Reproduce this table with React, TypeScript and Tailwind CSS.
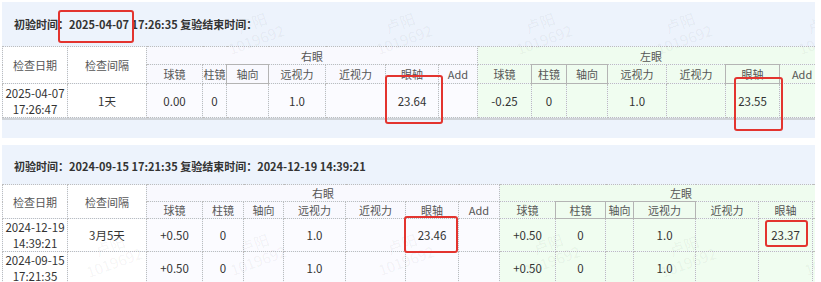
import React from "react";

const subHeads = ["球镜", "柱镜", "轴向", "远视力", "近视力", "眼轴", "Add"];

function Watermark({ cls }: { cls: string }) {
  return (
    <div
      className={
        "pointer-events-none absolute -rotate-[20deg] whitespace-nowrap text-[15px] leading-[17px] text-black/[0.055] font-['Noto_Sans_CJK_SC',sans-serif] " +
        cls
      }
    >
      <div className="pl-[16px]">卢阳</div>
      <div>1019692</div>
    </div>
  );
}

function DataTable({
  widths,
  heights,
  rows,
  solidRight,
  solidLeft,
  tableW,
}: {
  widths: string[];
  heights: string[];
  rows: string[][];
  solidRight: number[];
  solidLeft: number[];
  tableW: string;
}) {
  const base =
    "border border-dotted border-[#bdbdbd] p-0 text-center align-middle font-normal whitespace-nowrap overflow-hidden";
  return (
    <table className={"table-fixed border-collapse " + tableW}>
      <colgroup>
        {widths.map((w, i) => (
          <col key={i} className={w} />
        ))}
      </colgroup>
      <thead>
        <tr className={heights[0]}>
          <th rowSpan={2} className={base + " bg-white text-[11px] leading-[14px] text-[#555]"}>
            检查日期
          </th>
          <th rowSpan={2} className={base + " bg-white text-[11px] leading-[14px] text-[#555]"}>
            检查间隔
          </th>
          <th colSpan={7} className={base + " bg-[#f9f9fe] text-[11px] leading-[14px] text-[#555]"}>
            右眼
          </th>
          <th colSpan={7} className={base + " bg-[#effcef] text-[11px] leading-[14px] text-[#555]"}>
            左眼
          </th>
        </tr>
        <tr className={heights[1]}>
          {subHeads.map((h, i) => (
            <th
              key={"r" + i}
              className={
                base +
                " bg-[#f9f9fe] text-[11px] leading-[14px] text-[#555] " +
                (solidRight.includes(i) ? "!border-solid !border-[#b4b4b4]" : "")
              }
            >
              {h}
            </th>
          ))}
          {subHeads.map((h, i) => (
            <th
              key={"l" + i}
              className={
                base +
                " bg-[#effcef] text-[11px] leading-[14px] text-[#555] " +
                (solidLeft.includes(i) ? "!border-solid !border-[#b4b4b4]" : "")
              }
            >
              {h}
            </th>
          ))}
        </tr>
      </thead>
      <tbody>
        {rows.map((r, ri) => (
          <tr key={ri} className={heights[2 + ri]}>
            {r.map((v, ci) => (
              <td
                key={ci}
                className={
                  base +
                  " text-[11.5px] leading-[16px] text-[#333] " +
                  (ci < 2 ? "bg-white" : ci < 9 ? "bg-[#fbfbff]" : "bg-[#f0fdf0]")
                }
              >
                {v.includes("|") ? (
                  <>
                    <div>{v.split("|")[0]}</div>
                    <div>{v.split("|")[1]}</div>
                  </>
                ) : (
                  v
                )}
              </td>
            ))}
          </tr>
        ))}
      </tbody>
    </table>
  );
}

function RedBox({ cls }: { cls: string }) {
  return (
    <div
      className={
        "pointer-events-none absolute rounded-[3px] border-2 border-[#e3342f] " + cls
      }
    />
  );
}

export default function App() {
  return (
    <div className="relative h-[282px] w-[821px] overflow-hidden bg-white font-['Noto_Sans_CJK_SC',sans-serif]">
      <div className="flex flex-col gap-[7px] pl-[2px] pt-[2px]">
        {/* Section 1 */}
        <div className="relative flex h-[136px] w-[813px] shrink-0 flex-col overflow-hidden bg-[#edf3fc]">
          <div className="flex h-[44px] shrink-0 items-center pl-[12px] text-[11px] font-bold text-[#333]">
            初验时间：2025-04-07 17:26:35 复验结束时间：
          </div>
          <div className="shrink-0 border-b-2 border-[#cfd3d8]">
            <DataTable
              tableW="w-[822px]"
              widths={[
                "w-[65px]", "w-[79px]", "w-[56px]", "w-[24px]", "w-[42px]", "w-[57px]", "w-[60px]", "w-[53px]", "w-[39px]",
                "w-[54px]", "w-[35px]", "w-[41px]", "w-[59px]", "w-[59px]", "w-[54px]", "w-[45px]",
              ]}
              heights={["h-[18px]", "h-[19px]", "h-[34px]"]}
              rows={[
                ["2025-04-07|17:26:47", "1天", "0.00", "0", "", "1.0", "", "23.64", "", "-0.25", "0", "", "1.0", "", "23.55", ""],
              ]}
              solidRight={[2]}
              solidLeft={[1, 2, 5]}
            />
          </div>
          <Watermark cls="left-[222px] top-[12px]" />
          <Watermark cls="left-[370px] top-[12px]" />
          <Watermark cls="left-[510px] top-[12px]" />
          <Watermark cls="left-[650px] top-[12px]" />
          <Watermark cls="left-[792px] top-[12px]" />
        </div>

        {/* Section 2 */}
        <div className="relative flex h-[140px] w-[813px] shrink-0 flex-col overflow-hidden bg-[#edf3fc]">
          <div className="flex h-[39px] shrink-0 items-center pl-[12px] pt-[3px] text-[11px] font-bold text-[#333]">
            初验时间：2024-09-15 17:21:35 复验结束时间：2024-12-19 14:39:21
          </div>
          <div className="shrink-0">
            <DataTable
              tableW="w-[860px]"
              widths={[
                "w-[65px]", "w-[79px]", "w-[56px]", "w-[41px]", "w-[40px]", "w-[62px]", "w-[60px]", "w-[53px]", "w-[41px]",
                "w-[56px]", "w-[50px]", "w-[28px]", "w-[62px]", "w-[63px]", "w-[54px]", "w-[50px]",
              ]}
              heights={["h-[17px]", "h-[17px]", "h-[31px]", "h-[32px]"]}
              rows={[
                ["2024-12-19|14:39:21", "3月5天", "+0.50", "0", "", "1.0", "", "23.46", "", "+0.50", "0", "", "1.0", "", "23.37", ""],
                ["2024-09-15|17:21:35", "", "+0.50", "0", "", "1.0", "", "", "", "+0.50", "0", "", "1.0", "", "", ""],
              ]}
              solidRight={[]}
              solidLeft={[1, 2, 3]}
            />
          </div>
          <Watermark cls="left-[80px] top-[92px]" />
          <Watermark cls="left-[224px] top-[90px]" />
          <Watermark cls="left-[372px] top-[90px]" />
          <Watermark cls="left-[518px] top-[90px]" />
          <Watermark cls="left-[654px] top-[92px]" />
          <Watermark cls="left-[798px] top-[90px]" />
        </div>
      </div>

      <RedBox cls="left-[58px] top-[10px] h-[33px] w-[76px]" />
      <RedBox cls="left-[385px] top-[75px] h-[49px] w-[58px]" />
      <RedBox cls="left-[734px] top-[77px] h-[54px] w-[49px]" />
      <RedBox cls="left-[404px] top-[216px] h-[37px] w-[54px]" />
      <RedBox cls="left-[765px] top-[220px] h-[27px] w-[43px]" />
    </div>
  );
}
